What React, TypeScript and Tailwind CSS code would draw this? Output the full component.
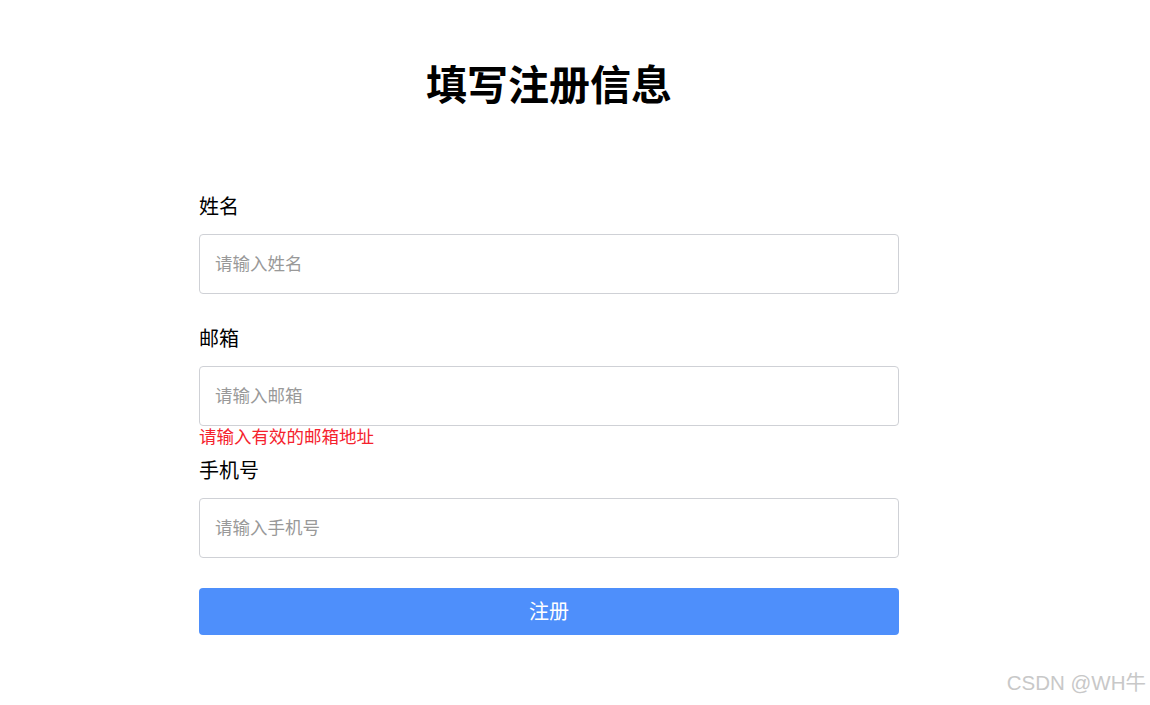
import React, { useState } from 'react';

const font = { fontFamily: '"Liberation Sans", "Noto Sans CJK SC", sans-serif' };

export default function App() {
    const [name, setName] = useState('');
    const [email, setEmail] = useState('');
    const [phone, setPhone] = useState('');

    const emailOk = /^[^\s@]+@[^\s@]+\.[^\s@]+$/.test(email);

    return (
        <div className="relative w-[1150px] h-[705px] bg-white text-black" style={font}>
            <div className="w-[700px] ml-[199px] pt-[62px]">
                <h1 className="text-[41px] leading-[48px] font-bold text-center mb-[82px]">填写注册信息</h1>

                <form onSubmit={(e) => e.preventDefault()}>
                    <div className="mb-[30px]">
                        <label className="block text-[20px] leading-[30px] mb-[12px]">姓名</label>
                        <input
                            value={name}
                            onChange={(e) => setName(e.target.value)}
                            placeholder="请输入姓名"
                            className="block w-full h-[60px] px-[15px] text-[17.5px] border border-[#cfd1d6] rounded-[4px] outline-none placeholder:text-[#999]"
                        />
                    </div>

                    <div className="relative mb-[30px]">
                        <label className="block text-[20px] leading-[30px] mb-[12px]">邮箱</label>
                        <input
                            value={email}
                            onChange={(e) => setEmail(e.target.value)}
                            placeholder="请输入邮箱"
                            className="block w-full h-[60px] px-[15px] text-[17.5px] border border-[#cfd1d6] rounded-[4px] outline-none placeholder:text-[#999]"
                        />
                        {!emailOk && (
                            <p className="absolute left-0 top-full text-[17.5px] leading-[22px] text-[#f5222d]">请输入有效的邮箱地址</p>
                        )}
                    </div>

                    <div className="mb-[30px]">
                        <label className="block text-[20px] leading-[30px] mb-[12px]">手机号</label>
                        <input
                            value={phone}
                            onChange={(e) => setPhone(e.target.value)}
                            placeholder="请输入手机号"
                            className="block w-full h-[60px] px-[15px] text-[17.5px] border border-[#cfd1d6] rounded-[4px] outline-none placeholder:text-[#999]"
                        />
                    </div>

                    <button type="submit" className="block w-full h-[47px] rounded-[4px] bg-[#4e8ffb] text-white text-[20px]">
                        注册
                    </button>
                </form>
            </div>

            <div className="absolute right-[4px] bottom-[6px] text-[20.5px] text-[#c8c8c8]">CSDN @WH牛</div>
        </div>
    );
}
